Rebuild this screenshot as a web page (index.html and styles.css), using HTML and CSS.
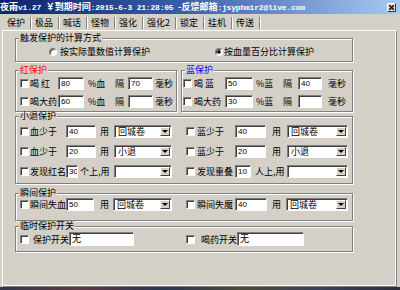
FILE: index.html
```html
<!DOCTYPE html>
<html lang="zh-CN">
<head>
<meta charset="utf-8">
<title>夜雨 保护</title>
<link rel="stylesheet" href="styles.css">
</head>
<body>
<div class="win">
  <div class="titlebar">
    <span class="ttl"><span>夜雨</span><span class="mono">v1.27 </span><span>￥到期时间</span><span class="mono">:2015-6-3 21:28:05 </span><span>-反馈邮箱</span><span class="mono">:jsyphmir2@live.com</span></span>
    <span class="close"><svg width="5" height="5" viewBox="0 0 5 5"><path d="M0 0L5 5M5 0L0 5" stroke="#000" stroke-width="1.3"/></svg></span>
  </div>
  <div class="tabs">
    <span class="tab first">保护</span><span class="sep"></span>
    <span class="tab">极品</span><span class="sep"></span>
    <span class="tab">喊话</span><span class="sep"></span>
    <span class="tab">怪物</span><span class="sep"></span>
    <span class="tab">强化</span><span class="sep"></span>
    <span class="tab">强化2</span><span class="sep"></span>
    <span class="tab">锁定</span><span class="sep"></span>
    <span class="tab">挂机</span><span class="sep"></span>
    <span class="tab">传送</span><span class="sep"></span>
  </div>
  <div class="panel">
    <div class="group g1">
      <div class="legend">触发保护的计算方式</div>
      <div class="row row-radio">
        <span class="radio r1"></span><span class="opt1">按实际量数值计算保护</span>
        <span class="radio on r2"></span><span class="opt2">按血量百分比计算保护</span>
      </div>
    </div>

    <div class="pair">
      <div class="group red">
        <div class="legend legend-red">红保护</div>
        <div class="row rr1">
          <span class="cb cb-l"></span><span class="lbl w28">喝 红</span><span class="edit w26">80</span>
          <span class="lbl ml4 w27">%血</span><span class="lbl w13">隔</span><span class="edit w25">70</span><span class="lbl ml2">毫秒</span>
        </div>
        <div class="row rr2">
          <span class="cb cb-l"></span><span class="lbl w28">喝大药</span><span class="edit w26">60</span>
          <span class="lbl ml4 w27">%血</span><span class="lbl w13">隔</span><span class="edit w25"></span><span class="lbl ml2">毫秒</span>
        </div>
      </div>
      <div class="group blue">
        <div class="legend legend-blue">蓝保护</div>
        <div class="row rr1">
          <span class="cb cb-b"></span><span class="lbl ml2 w31">喝 蓝</span><span class="edit w28">50</span>
          <span class="lbl ml3 w27">%蓝</span><span class="lbl w15">隔</span><span class="edit w24">40</span><span class="lbl ml6">毫秒</span>
        </div>
        <div class="row rr2">
          <span class="cb cb-b"></span><span class="lbl ml2 w31">喝大药</span><span class="edit w28">30</span>
          <span class="lbl ml3 w27">%蓝</span><span class="lbl w15">隔</span><span class="edit w24"></span><span class="lbl ml6">毫秒</span>
        </div>
      </div>
    </div>

    <div class="group g3">
      <div class="legend">小退保护</div>
      <div class="row r3a">
        <span class="cb cb-l"></span><span class="lbl w36">血少于</span><span class="edit w30">40</span>
        <span class="lbl ml4 w14">用</span><span class="combo w58"><span class="ctext">回城卷</span><span class="cbtn"></span></span>
        <span class="cb cb-r"></span><span class="lbl ml2 w38">蓝少于</span><span class="edit w31">40</span>
        <span class="lbl ml6 w15">用</span><span class="combo w61"><span class="ctext">回城卷</span><span class="cbtn"></span></span>
      </div>
      <div class="row r3b">
        <span class="cb cb-l"></span><span class="lbl w36">血少于</span><span class="edit w30">20</span>
        <span class="lbl ml4 w14">用</span><span class="combo w58"><span class="ctext">小退</span><span class="cbtn"></span></span>
        <span class="cb cb-r"></span><span class="lbl ml2 w38">蓝少于</span><span class="edit w31">20</span>
        <span class="lbl ml6 w15">用</span><span class="combo w61"><span class="ctext">小退</span><span class="cbtn"></span></span>
      </div>
      <div class="row r3b">
        <span class="cb cb-l"></span><span class="lbl w36">发现红名</span><span class="edit w12">30</span>
        <span class="lbl ml2 w34">个上,用</span><span class="combo w58"><span class="ctext"></span><span class="cbtn"></span></span>
        <span class="cb cb-r"></span><span class="lbl ml2 w38">发现重叠</span><span class="edit w16">10</span>
        <span class="lbl ml4 w32">人上,用</span><span class="combo w61"><span class="ctext"></span><span class="cbtn"></span></span>
      </div>
    </div>

    <div class="group g4">
      <div class="legend">瞬间保护</div>
      <div class="row r4">
        <span class="cb cb-l"></span><span class="lbl w36">瞬间失血</span><span class="edit w28">50</span>
        <span class="lbl ml6 w13">用</span><span class="combo w59"><span class="ctext">回城卷</span><span class="cbtn"></span></span>
        <span class="cb cb-r"></span><span class="lbl ml2 w38">瞬间失魔</span><span class="edit w32">40</span>
        <span class="lbl ml5 w14">用</span><span class="combo w62"><span class="ctext">回城卷</span><span class="cbtn"></span></span>
      </div>
    </div>

    <div class="group g5">
      <div class="legend">临时保护开关</div>
      <div class="row r5">
        <span class="cb cb-l"></span><span class="lbl ml3 w36">保护开关</span><span class="edit wide w65">无</span>
        <span class="cb cb-s"></span><span class="lbl ml6 w36">喝药开关</span><span class="edit wide w67">无</span>
      </div>
    </div>
  </div>
  <div class="taskbar"></div>
</div>
</body>
</html>
```
FILE: styles.css
```css
* { box-sizing: border-box; }
html, body { margin: 0; padding: 0; }
body {
  width: 400px;
  height: 290px;
  overflow: hidden;
  background: #d4d0c8;
  font-family: "Noto Sans CJK SC", "Liberation Sans", sans-serif;
  font-size: 9px;
  color: #000;
}
.win {
  width: 400px;
  height: 290px;
  display: flex;
  flex-direction: column;
  background: #d4d0c8;
}

/* title bar */
.titlebar {
  height: 14px;
  flex: none;
  display: flex;
  align-items: center;
  background: linear-gradient(to right, #0a246a 0%, #3a5ca8 45%, #a6caf0 100%);
  color: #fff;
  font-weight: bold;
  white-space: nowrap;
  overflow: hidden;
}
.ttl { line-height: 14px; font-size: 9px; }
.mono { font-family: "Liberation Mono", monospace; font-size: 8px; letter-spacing: -0.2px; }
.close {
  margin-left: auto;
  margin-right: 4px;
  width: 9px;
  height: 9px;
  display: flex;
  align-items: center;
  justify-content: center;
  background: #d4d0c8;
  border: 1px solid;
  border-color: #fff #404040 #404040 #fff;
}

/* tabs */
.tabs {
  height: 16px;
  flex: none;
  display: flex;
  align-items: center;
  padding-left: 3px;
  padding-top: 2px;
}
.tab { padding: 0 5px 0 3px; line-height: 12px; white-space: nowrap; }
.tab.first { padding-left: 4px; }
.sep {
  width: 2px;
  height: 12px;
  border-left: 1px solid #808080;
  border-right: 1px solid #fff;
}

/* panel */
.panel {
  flex: none;
  margin-left: 2px;
  width: 394px;
  height: 256px;
  border: 1px solid #fff;
  box-shadow: 1px 1px 0 #808080, -1px 0 0 #d4d0c8;
  padding-left: 12px;
  padding-top: 7px;
}
.taskbar {
  margin-top: 1px;
  height: 3px;
  flex: none;
  background: linear-gradient(to right, #33384a, #5a3a44 20%, #2a3550 40%, #4a4a3a 60%, #3a4058 80%, #2b2f3a);
}

/* group boxes */
.group {
  border: 1px solid #808080;
  box-shadow: inset 1px 1px 0 #fff, 1px 1px 0 #fff;
}
.legend {
  width: max-content;
  height: 10px;
  line-height: 10px;
  margin: -6px 0 0 3px;
  padding: 0 1px;
  background: #d4d0c8;
}
.legend-red { color: #ff0000; }
.legend-blue { color: #0000ff; }

.g1 { width: 338px; height: 24px; }
.pair { display: flex; gap: 4px; margin-top: 8px; }
.red { width: 162px; height: 42px; }
.blue { width: 172px; height: 42px; }
.g3 { width: 338px; height: 68px; margin-top: 4px; }
.g4 { width: 338px; height: 28px; margin-top: 9px; }
.g5 { width: 338px; height: 26px; margin-top: 5px; }

/* rows */
.row {
  display: flex;
  align-items: center;
  height: 13px;
  white-space: nowrap;
}
.row-radio { height: 11px; margin-top: 3px; }
.rr1 { margin-top: 2px; }
.rr2 { margin-top: 5px; }
.r3a { margin-top: 4px; }
.r3b { margin-top: 7px; }
.r4 { margin-top: 0; }
.r5 { margin-top: 1px; height: 14px; }

.lbl { flex: none; line-height: 13px; }

/* controls */
.cb {
  flex: none;
  width: 9px;
  height: 9px;
  background: #fff;
  border: 1px solid;
  border-color: #808080 #fff #fff #808080;
  box-shadow: inset 1px 1px 0 #404040;
}
.cb-l { margin-left: 4px; margin-right: 1px; }
.cb-b { margin-left: 1px; }
.cb-r { margin-left: 14px; }
.cb-s { margin-left: 52px; }

.radio {
  flex: none;
  width: 8px;
  height: 8px;
  border-radius: 50%;
  background: #fff;
  border: 1px solid;
  border-color: #808080 #fff #fff #808080;
  box-shadow: inset 1px 1px 0 #404040;
}
.radio.on { background: radial-gradient(circle, #000 0 1.4px, #fff 1.9px); }
.r1 { margin-left: 33px; }
.opt1 { margin-left: 3px; width: 153px; }
.r2 { margin-left: 2px; }
.opt2 { margin-left: 1px; }

.edit {
  flex: none;
  height: 13px;
  background: #fff;
  border: 1px solid;
  border-color: #808080 #fff #fff #808080;
  box-shadow: inset 1px 1px 0 #404040;
  font-family: "Liberation Sans", sans-serif;
  font-size: 8px;
  line-height: 11px;
  padding-left: 2px;
  overflow: hidden;
}
.edit.wide {
  height: 14px;
  font-family: "Noto Sans CJK SC", sans-serif;
  font-size: 9px;
  line-height: 12px;
}

.combo {
  flex: none;
  height: 13px;
  display: flex;
  background: #fff;
  border: 1px solid;
  border-color: #808080 #fff #fff #808080;
  box-shadow: inset 1px 1px 0 #404040;
  padding: 1px 1px 1px 1px;
}
.ctext { flex: 1; line-height: 9px; padding-left: 2px; }
.cbtn {
  flex: none;
  width: 10px;
  height: 9px;
  display: flex;
  align-items: center;
  justify-content: center;
  background: #d4d0c8;
  border: 1px solid;
  border-color: #fff #404040 #404040 #fff;
}
.cbtn::after {
  content: "";
  width: 0;
  height: 0;
  border-left: 3px solid transparent;
  border-right: 3px solid transparent;
  border-top: 3px solid #000;
}

/* spacing helpers */
.ml2 { margin-left: 2px; }
.ml3 { margin-left: 3px; }
.ml4 { margin-left: 4px; }
.ml5 { margin-left: 5px; }
.ml6 { margin-left: 6px; }
.w12 { width: 12px; }
.w13 { width: 13px; }
.w14 { width: 14px; }
.w15 { width: 15px; }
.w16 { width: 16px; }
.w24 { width: 24px; }
.w25 { width: 25px; }
.w26 { width: 26px; }
.w27 { width: 27px; }
.w28 { width: 28px; }
.w30 { width: 30px; }
.w31 { width: 31px; }
.w32 { width: 32px; }
.w34 { width: 34px; }
.w36 { width: 36px; }
.w38 { width: 38px; }
.w58 { width: 58px; }
.w59 { width: 59px; }
.w61 { width: 61px; }
.w62 { width: 62px; }
.w65 { width: 65px; }
.w67 { width: 67px; }
```
